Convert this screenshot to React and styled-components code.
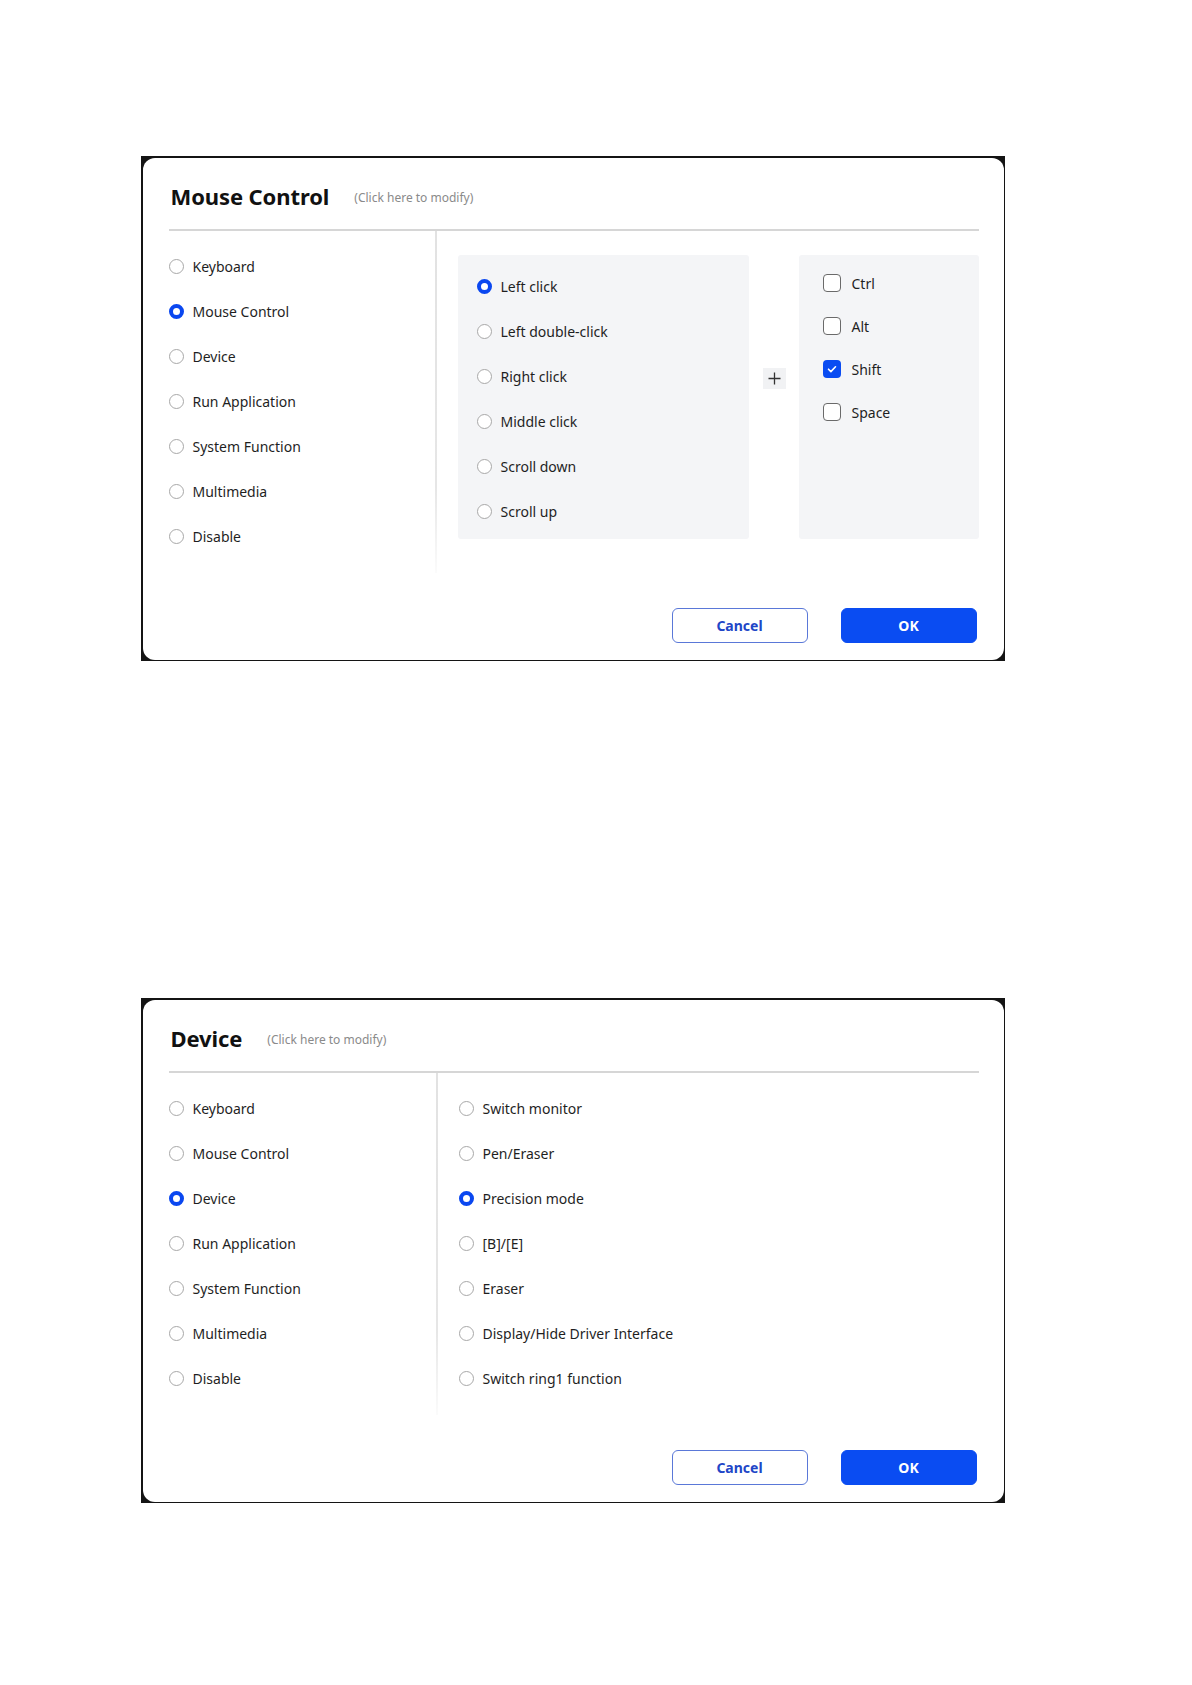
import React from "react";
import styled, { createGlobalStyle } from "styled-components";

const GlobalStyle = createGlobalStyle`
  html, body {
    margin: 0;
    padding: 0;
    background: #ffffff;
  }
  body {
    font-family: "Noto Sans", "Open Sans", Arial, sans-serif;
    color: #1f1f1f;
  }
`;

const Page = styled.div`
  width: 1192px;
  min-height: 1685px;
  padding: 156px 0 0 141px;
  box-sizing: border-box;
  display: flex;
  flex-direction: column;
  gap: 337px;
`;

const Frame = styled.div`
  width: 864px;
  height: 505px;
  box-sizing: border-box;
  padding: 1.5px;
  background: #141414;
`;

const Dialog = styled.div`
  height: 100%;
  background: #ffffff;
  border-radius: 12px;
  display: flex;
  flex-direction: column;
  box-sizing: border-box;
  padding: 0 25px 17px 26px;
`;

const Header = styled.div`
  height: 71px;
  display: flex;
  align-items: center;
  gap: 25px;
  padding: 6px 0 0 2px;
  box-sizing: border-box;
`;

const Title = styled.h2`
  margin: 0;
  font-size: 22px;
  font-weight: 700;
  color: #111;
  letter-spacing: -0.1px;
`;

const Hint = styled.span`
  font-size: 12px;
  color: #8a8a8a;
  padding-top: 2px;
`;

const Rule = styled.div`
  height: 2px;
  background: #d6d6d6;
`;

const Body = styled.div`
  height: 342px;
  display: flex;
`;

const LeftCol = styled.div`
  width: 267px;
  padding-top: 13px;
  box-sizing: border-box;
`;

const Split = styled.div`
  width: 2px;
  background: linear-gradient(#e2e2e2 0%, #e6e6e6 75%, #fbfbfb 100%);
`;

const RightCol = styled.div`
  flex: 1;
  display: flex;
  align-items: flex-start;
  padding: ${(p) => (p.$plain ? "13px 0 0 21px" : "24px 0 0 21px")};
`;

const Option = styled.div`
  height: ${(p) => p.$h || 45}px;
  display: flex;
  align-items: center;
  gap: ${(p) => p.$gap || 9}px;
  font-size: 14px;
  color: #1f1f1f;
  white-space: nowrap;
`;

const Radio = styled.span`
  width: 15px;
  height: 15px;
  border-radius: 50%;
  box-sizing: border-box;
  flex-shrink: 0;
  background: #fff;
  border: ${(p) => (p.$on ? "4px solid #0a47f0" : "1.5px solid #a8a8a8")};
`;

const Check = styled.span`
  width: 18px;
  height: 18px;
  border-radius: 4px;
  box-sizing: border-box;
  flex-shrink: 0;
  display: flex;
  align-items: center;
  justify-content: center;
  background: ${(p) => (p.$on ? "#0a4cf2" : "#fff")};
  border: ${(p) => (p.$on ? "none" : "1.5px solid #6a6a6a")};
`;

const Panel = styled.div`
  width: ${(p) => p.$w}px;
  height: 284px;
  background: #f4f5f7;
  border-radius: 3px;
  box-sizing: border-box;
  padding: ${(p) => p.$pad};
`;

const PlusBox = styled.div`
  width: 23px;
  height: 21px;
  margin: 113px 13px 0 14px;
  background: #f1f2f4;
  display: flex;
  align-items: center;
  justify-content: center;
`;

const Footer = styled.div`
  margin-top: auto;
  display: flex;
  justify-content: flex-end;
  gap: 33px;
  padding-right: 2px;
`;

const Button = styled.button`
  width: 136px;
  height: 35px;
  border-radius: 6px;
  font-family: "Noto Sans", "Open Sans", Arial, sans-serif;
  font-size: 14px;
  font-weight: 700;
  cursor: pointer;
  border: 1.5px solid ${(p) => (p.$primary ? "#0a4cf2" : "#5a78d8")};
  background: ${(p) => (p.$primary ? "#0a4cf2" : "#ffffff")};
  color: ${(p) => (p.$primary ? "#ffffff" : "#2146c7")};
`;

const categories = [
  "Keyboard",
  "Mouse Control",
  "Device",
  "Run Application",
  "System Function",
  "Multimedia",
  "Disable",
];

const mouseActions = [
  "Left click",
  "Left double-click",
  "Right click",
  "Middle click",
  "Scroll down",
  "Scroll up",
];

const modifiers = [
  { label: "Ctrl", on: false },
  { label: "Alt", on: false },
  { label: "Shift", on: true },
  { label: "Space", on: false },
];

const deviceActions = [
  "Switch monitor",
  "Pen/Eraser",
  "Precision mode",
  "[B]/[E]",
  "Eraser",
  "Display/Hide Driver Interface",
  "Switch ring1 function",
];

function RadioList({ items, active }) {
  return items.map((label) => (
    <Option key={label}>
      <Radio $on={label === active} />
      {label}
    </Option>
  ));
}

function SettingsDialog({ title, children }) {
  return (
    <Frame>
      <Dialog>
        <Header>
          <Title>{title}</Title>
          <Hint>(Click here to modify)</Hint>
        </Header>
        <Rule />
        <Body>
          <LeftCol>
            <RadioList items={categories} active={title} />
          </LeftCol>
          <Split />
          {children}
        </Body>
        <Footer>
          <Button>Cancel</Button>
          <Button $primary>OK</Button>
        </Footer>
      </Dialog>
    </Frame>
  );
}

export default function App() {
  return (
    <>
      <GlobalStyle />
      <Page>
        <SettingsDialog title="Mouse Control">
          <RightCol>
            <Panel $w={291} $pad="9px 0 0 19px">
              <RadioList items={mouseActions} active="Left click" />
            </Panel>
            <PlusBox>
              <svg width="13" height="13" viewBox="0 0 13 13">
                <path d="M6.5 0.5v12M0.5 6.5h12" stroke="#333" strokeWidth="1.3" />
              </svg>
            </PlusBox>
            <Panel $w={180} $pad="7px 0 0 24px">
              {modifiers.map((m) => (
                <Option key={m.label} $h={43} $gap={11}>
                  <Check $on={m.on}>
                    {m.on && (
                      <svg width="12" height="12" viewBox="0 0 12 12">
                        <path
                          d="M2.5 6.2l2.4 2.4 4.6-4.8"
                          fill="none"
                          stroke="#fff"
                          strokeWidth="1.6"
                          strokeLinecap="round"
                          strokeLinejoin="round"
                        />
                      </svg>
                    )}
                  </Check>
                  {m.label}
                </Option>
              ))}
            </Panel>
          </RightCol>
        </SettingsDialog>
        <SettingsDialog title="Device">
          <RightCol $plain>
            <div>
              <RadioList items={deviceActions} active="Precision mode" />
            </div>
          </RightCol>
        </SettingsDialog>
      </Page>
    </>
  );
}
